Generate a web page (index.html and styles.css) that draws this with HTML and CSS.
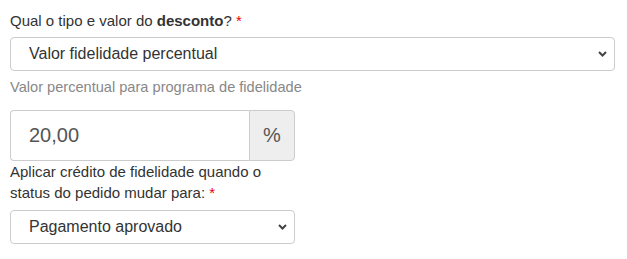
FILE: index.html
```html
<!DOCTYPE html>
<html lang="pt">
<head>
<meta charset="utf-8">
<link rel="stylesheet" href="styles.css">
</head>
<body>
<div class="form">
  <div class="group">
    <label class="label">Qual o tipo e valor do <b>desconto</b>? <span class="req">*</span></label>
    <div class="select wide">
      <span class="select-text">Valor fidelidade percentual</span>
      <svg class="chev" width="9" height="6" viewBox="0 0 9 6"><path d="M1 1 L4.5 4.5 L8 1" fill="none" stroke="#444" stroke-width="2"/></svg>
    </div>
    <div class="help">Valor percentual para programa de fidelidade</div>
  </div>
  <div class="col">
    <div class="input-group">
      <div class="input">20,00</div>
      <div class="addon">%</div>
    </div>
    <label class="label label2">Aplicar crédito de fidelidade quando o status do pedido mudar para: <span class="req">*</span></label>
    <div class="select">
      <span class="select-text">Pagamento aprovado</span>
      <svg class="chev" width="9" height="6" viewBox="0 0 9 6"><path d="M1 1 L4.5 4.5 L8 1" fill="none" stroke="#444" stroke-width="2"/></svg>
    </div>
  </div>
</div>
</body>
</html>
```
FILE: styles.css
```css
html, body { margin: 0; padding: 0; background: #fff; }
body {
  font-family: "Liberation Sans", Arial, sans-serif;
  font-size: 15px;
  color: #333;
  padding: 10px;
}
.form { width: 605px; }
.group { display: flex; flex-direction: column; }
.label { display: block; line-height: 21px; margin-bottom: 6px; }
.label b { font-weight: bold; }
.req { color: #e00; }
.select {
  box-sizing: border-box;
  height: 34px;
  border: 1px solid #ccc;
  border-radius: 4px;
  display: flex;
  align-items: center;
  justify-content: space-between;
  padding: 0 7px 0 18px;
  font-size: 16px;
  color: #333;
  background: #fff;
}
.chev { display: block; }
.help { color: #888; font-size: 14.6px; line-height: 20px; margin-top: 6px; margin-bottom: 13px; }
.col { width: 285px; display: flex; flex-direction: column; }
.input-group {
  display: flex;
  height: 51px;
  box-sizing: border-box;
}
.input {
  flex: 1;
  box-sizing: border-box;
  border: 1px solid #ccc;
  border-right: none;
  border-radius: 4px 0 0 4px;
  font-size: 20px;
  color: #555;
  padding-left: 18px;
  display: flex;
  align-items: center;
}
.addon {
  width: 46px;
  box-sizing: border-box;
  border: 1px solid #ccc;
  border-radius: 0 4px 4px 0;
  background: #eee;
  font-size: 20px;
  color: #555;
  display: flex;
  align-items: center;
  justify-content: center;
}
.label2 { margin-top: 0; margin-bottom: 7px; }
```
